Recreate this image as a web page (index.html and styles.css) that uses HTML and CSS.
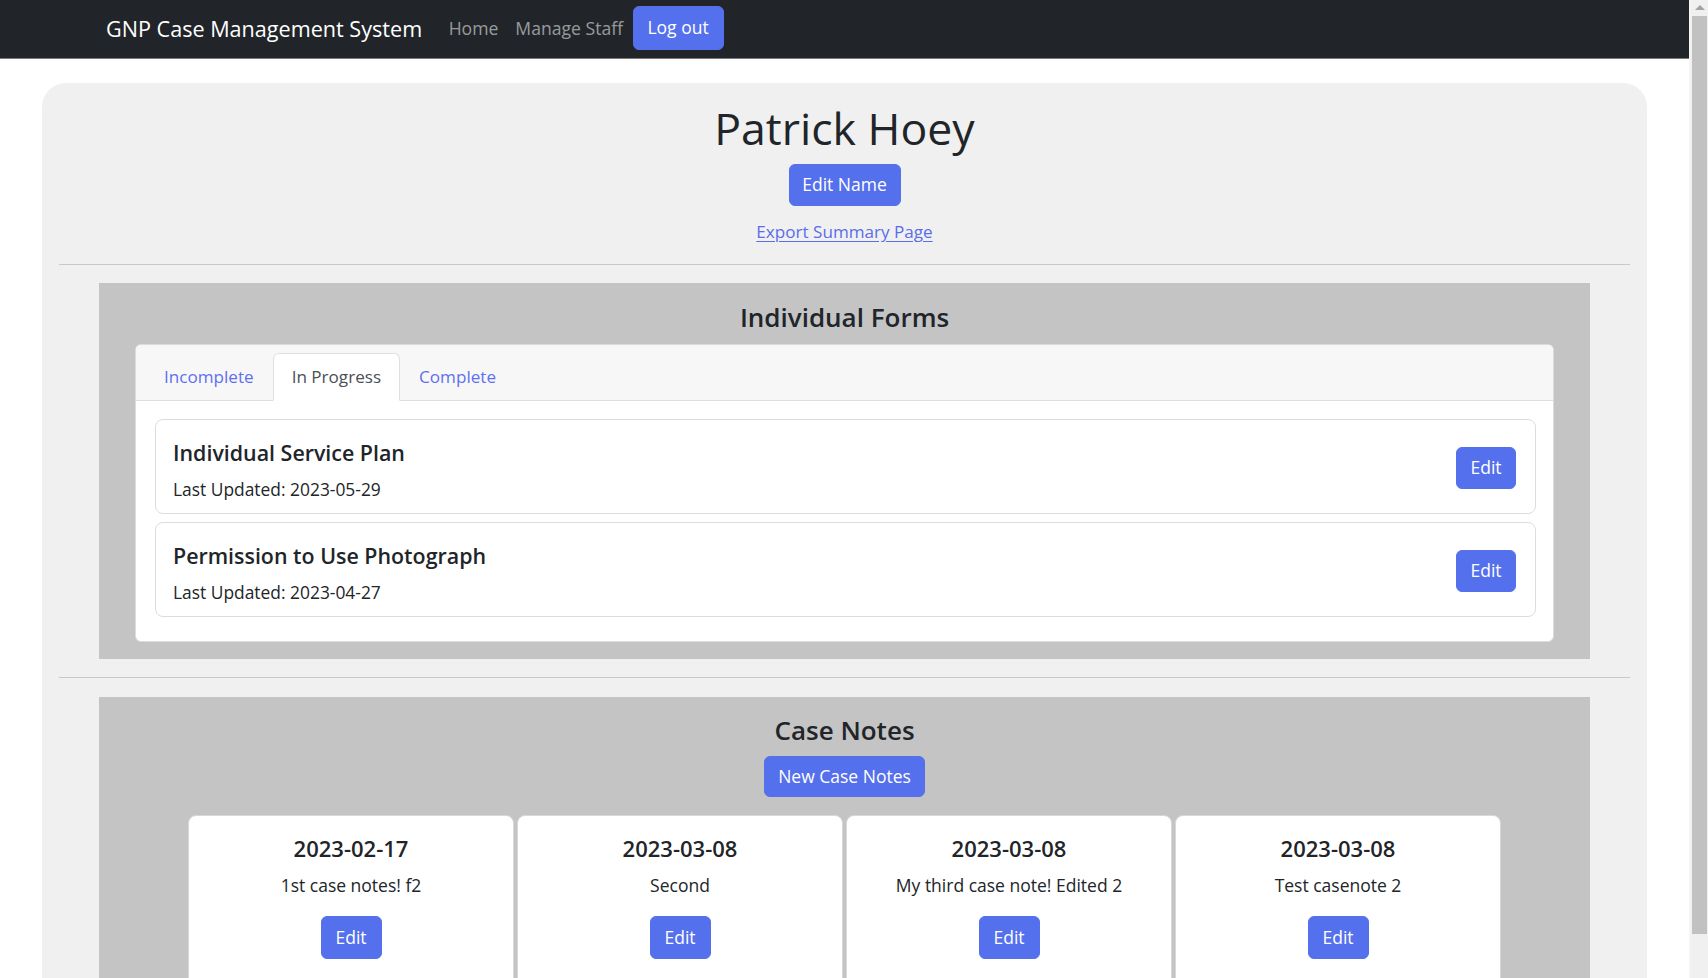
FILE: index.html
```html
<!DOCTYPE html>
<html lang="en">
<head>
<meta charset="utf-8">
<title>GNP Case Management System</title>
<link rel="stylesheet" href="styles.css">
</head>
<body>
<div class="viewport">
  <div class="main">
    <nav class="navbar">
      <a class="brand" href="#">GNP Case Management System</a>
      <a class="nav-link" href="#">Home</a>
      <a class="nav-link" href="#">Manage Staff</a>
      <button class="btn btn-nav">Log out</button>
    </nav>

    <div class="container">
      <header class="profile">
        <h1 class="name">Patrick Hoey</h1>
        <button class="btn btn-name">Edit Name</button>
        <a class="export" href="#">Export Summary Page</a>
      </header>

      <hr class="divider">

      <section class="panel">
        <h2 class="panel-title">Individual Forms</h2>
        <div class="tabs-card">
          <div class="tabs-header">
            <a class="tab" href="#">Incomplete</a>
            <a class="tab active" href="#">In Progress</a>
            <a class="tab" href="#">Complete</a>
          </div>
          <div class="tabs-body">
            <div class="form-item">
              <div class="form-text">
                <h3 class="form-title">Individual Service Plan</h3>
                <p class="form-date">Last Updated: 2023-05-29</p>
              </div>
              <button class="btn btn-edit">Edit</button>
            </div>
            <div class="form-item">
              <div class="form-text">
                <h3 class="form-title">Permission to Use Photograph</h3>
                <p class="form-date">Last Updated: 2023-04-27</p>
              </div>
              <button class="btn btn-edit">Edit</button>
            </div>
          </div>
        </div>
      </section>

      <hr class="divider divider-tight">

      <section class="panel notes">
        <h2 class="panel-title">Case Notes</h2>
        <button class="btn btn-new">New Case Notes</button>
        <div class="note-grid">
          <div class="note-card">
            <h4 class="note-date">2023-02-17</h4>
            <p class="note-text">1st case notes! f2</p>
            <button class="btn btn-edit">Edit</button>
          </div>
          <div class="note-card">
            <h4 class="note-date">2023-03-08</h4>
            <p class="note-text">Second</p>
            <button class="btn btn-edit">Edit</button>
          </div>
          <div class="note-card">
            <h4 class="note-date">2023-03-08</h4>
            <p class="note-text">My third case note! Edited 2</p>
            <button class="btn btn-edit">Edit</button>
          </div>
          <div class="note-card">
            <h4 class="note-date">2023-03-08</h4>
            <p class="note-text">Test casenote 2</p>
            <button class="btn btn-edit">Edit</button>
          </div>
        </div>
      </section>
    </div>
  </div>

  <aside class="scrollbar" aria-hidden="true">
    <div class="scroll-arrow"></div>
    <div class="scroll-thumb"></div>
  </aside>
</div>
</body>
</html>
```

FILE: styles.css
```css
* { box-sizing: border-box; }

html, body {
  margin: 0;
  padding: 0;
  height: 100%;
  overflow: hidden;
}

body {
  font-family: "Open Sans", "Noto Sans", "Liberation Sans", sans-serif;
  font-size: 17.5px;
  color: #212529;
  background: #ffffff;
}

.viewport {
  display: flex;
  height: 100vh;
  overflow: hidden;
}

.main {
  flex: 1;
  min-width: 0;
  overflow: hidden;
}

/* ---------- navbar ---------- */
.navbar {
  height: 59px;
  background: #212529;
  border-bottom: 1px solid #7a7a7a;
  display: flex;
  align-items: center;
  padding: 0 0 2px 106px;
}

.brand {
  color: #ffffff;
  text-decoration: none;
  font-size: 21.6px;
  margin-right: 18px;
}

.nav-link {
  color: rgba(255, 255, 255, 0.55);
  text-decoration: none;
  font-size: 17.6px;
  padding: 0 8.5px;
}

.btn {
  font-family: inherit;
  background: #5570ec;
  color: #ffffff;
  border: 1px solid #5570ec;
  border-radius: 6px;
  cursor: pointer;
  padding: 0;
  line-height: 1;
}

.btn-nav {
  width: 91px;
  height: 44px;
  font-size: 17.5px;
  margin-left: 1px;
}

/* ---------- container ---------- */
.container {
  width: 1605px;
  margin: 24px auto 0;
  background: #f0f0f0;
  border-radius: 24px 24px 0 0;
  padding: 0 17px 40px;
  min-height: 1000px;
}

.profile {
  display: flex;
  flex-direction: column;
  align-items: center;
  padding-top: 20px;
}

.name {
  margin: 0;
  font-size: 44.6px;
  font-weight: 400;
  line-height: 50px;
}

.btn-name {
  margin-top: 11px;
  width: 112px;
  height: 42px;
  font-size: 17.5px;
}

.export {
  margin-top: 14px;
  color: #5a6dea;
  font-size: 17.1px;
  line-height: 24px;
  text-decoration: underline;
  text-underline-offset: 3px;
}

.divider {
  margin: 20px 0 18px;
  border: 0;
  border-top: 1px solid #c9c9c9;
  height: 0;
}

.divider-tight {
  margin: 18px 0 19px;
}

/* ---------- panels ---------- */
.panel {
  margin: 0 40px;
  background: #c4c4c4;
  padding: 18px 36px 17px;
}

.panel-title {
  margin: 0;
  text-align: center;
  font-size: 26px;
  font-weight: 600;
  line-height: 32px;
}

.tabs-card {
  margin-top: 11px;
  background: #ffffff;
  border: 1px solid #dcdcdc;
  border-radius: 6px;
  overflow: hidden;
}

.tabs-header {
  background: #f7f7f7;
  border-bottom: 1px solid #dfdfdf;
  height: 56px;
  padding: 8px 0 0 9px;
  display: flex;
  align-items: flex-end;
}

.tab {
  display: block;
  height: 48px;
  line-height: 46px;
  padding: 0 18px;
  margin-bottom: -1px;
  color: #5f70ee;
  text-decoration: none;
  font-size: 17.1px;
  border: 1px solid transparent;
  border-radius: 6px 6px 0 0;
}

.tab.active {
  background: #ffffff;
  color: #495057;
  border-color: #dfdfdf #dfdfdf #ffffff;
}

.tabs-body {
  padding: 18px 17px 24px 19px;
  display: flex;
  flex-direction: column;
  gap: 8px;
}

.form-item {
  height: 95px;
  border: 1px solid #dcdcdc;
  border-radius: 8px;
  padding: 0 19px 0 17px;
  display: flex;
  justify-content: space-between;
  align-items: center;
}

.form-text {
  align-self: flex-start;
  padding-top: 19px;
}

.form-title {
  margin: 0;
  font-size: 21.4px;
  font-weight: 600;
  line-height: 28px;
}

.form-date {
  margin: 10px 0 0;
  font-size: 17.4px;
  line-height: 24px;
}

.btn-edit {
  width: 60px;
  height: 42px;
  font-size: 17.5px;
}

.form-item .btn-edit {
  margin-top: 3px;
}

/* ---------- case notes ---------- */
.notes {
  display: flex;
  flex-direction: column;
  align-items: center;
  padding-top: 17px;
  min-height: 400px;
}

.btn-new {
  margin-top: 10px;
  width: 161px;
  height: 41px;
  font-size: 17.5px;
}

.note-grid {
  margin-top: 18px;
  display: grid;
  grid-template-columns: repeat(4, 326px);
  gap: 3px;
}

.note-card {
  background: #ffffff;
  border: 1px solid #d8d8d8;
  border-radius: 8px;
  padding: 18px 10px 30px;
  display: flex;
  flex-direction: column;
  align-items: center;
  min-height: 200px;
}

.note-date {
  margin: 0;
  font-size: 22px;
  font-weight: 600;
  line-height: 28px;
}

.note-text {
  margin: 11px 0 0;
  font-size: 17.5px;
  line-height: 24px;
}

.note-card .btn-edit {
  margin-top: 19px;
  width: 61px;
  height: 43px;
}

/* ---------- fake scrollbar ---------- */
.scrollbar {
  width: 19px;
  flex: none;
  height: 100vh;
  background: #f0f0f0;
  border-left: 2px solid #f4f4f4;
  display: flex;
  flex-direction: column;
  align-items: center;
}

.scroll-arrow {
  margin-top: 5px;
  width: 0;
  height: 0;
  border-left: 5px solid transparent;
  border-right: 5px solid transparent;
  border-bottom: 5px solid #a3a3a3;
}

.scroll-thumb {
  margin-top: 6px;
  width: 15px;
  height: 918px;
  background: #c1c1c1;
}
```
